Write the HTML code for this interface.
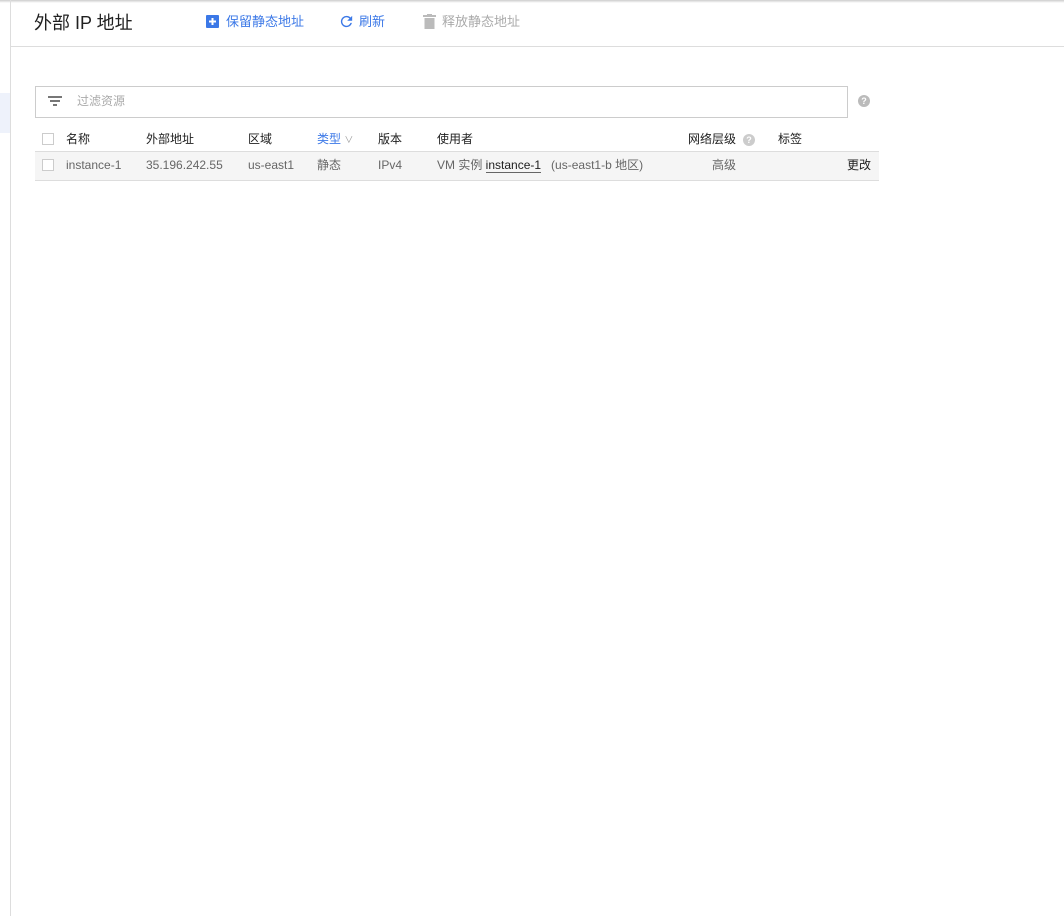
<!DOCTYPE html>
<html><head><meta charset="utf-8"><style>
body{margin:0;width:1064px;height:916px;background:#fff;font-family:"Liberation Sans","Noto Sans CJK SC",sans-serif;position:relative;overflow:hidden;font-size:12px;color:#212121}
.a{position:absolute;white-space:nowrap;line-height:16px}
</style></head><body>
<div class="a" style="left:0;top:0;width:1064px;height:3px;background:linear-gradient(#ccc,#fff)"></div>
<div class="a" style="left:10px;top:0;width:1px;height:916px;background:#ddd"></div>
<div class="a" style="left:0;top:93px;width:10px;height:40px;background:#eef2fb"></div>
<div class="a" style="left:11px;top:46px;width:1053px;height:1px;background:#ddd"></div>
<div class="a" style="left:34px;top:12px;font-size:18px;line-height:22px;color:#212121">外部 IP 地址</div>
<svg class="a" style="left:206px;top:15px" width="13" height="13" viewBox="0 0 13 13"><rect width="13" height="13" rx="1" fill="#3b78e7"/><path d="M6.5 3v7M3 6.5h7" stroke="#fff" stroke-width="2"/></svg>
<div class="a" style="left:226px;top:14px;font-size:13px;color:#3b78e7">保留静态地址</div>
<svg class="a" style="left:338px;top:13px" width="17" height="17" viewBox="0 0 24 24"><path d="M17.65 6.35A7.96 7.96 0 0 0 12 4a8 8 0 1 0 7.73 10h-2.08A6 6 0 1 1 12 6c1.66 0 3.14.69 4.22 1.78L13 11h7V4z" fill="#3b78e7"/></svg>
<div class="a" style="left:359px;top:14px;font-size:13px;color:#3b78e7">刷新</div>
<svg class="a" style="left:423px;top:14px" width="13" height="15" viewBox="0 0 13 15"><rect x="0" y="1" width="13" height="2" fill="#bbb"/><rect x="4" y="0" width="5" height="2" fill="#bbb"/><rect x="1.5" y="4" width="10" height="11" fill="#bbb"/></svg>
<div class="a" style="left:442px;top:14px;font-size:13px;color:#aaa">释放静态地址</div>
<div class="a" style="left:35px;top:86px;width:811px;height:30px;border:1px solid #ccc"></div>
<div class="a" style="left:48px;top:96px;width:14px;height:2px;background:#777"></div>
<div class="a" style="left:50px;top:100px;width:10px;height:2px;background:#777"></div>
<div class="a" style="left:53px;top:104px;width:4px;height:2px;background:#777"></div>
<div class="a" style="left:77px;top:93px;color:#aaa">过滤资源</div>
<div class="a" style="left:858px;top:95px;width:12px;height:12px;border-radius:50%;background:#bbb;color:#fff;font-size:9px;text-align:center;line-height:12px;font-weight:bold">?</div>
<div class="a" style="left:42px;top:133px;width:10px;height:10px;border:1px solid #ccc"></div>
<div class="a" style="left:66px;top:131px">名称</div>
<div class="a" style="left:146px;top:131px">外部地址</div>
<div class="a" style="left:248px;top:131px">区域</div>
<div class="a" style="left:317px;top:131px;color:#3b78e7">类型 <span style="color:#999;font-size:9px">∨</span></div>
<div class="a" style="left:378px;top:131px">版本</div>
<div class="a" style="left:437px;top:131px">使用者</div>
<div class="a" style="left:688px;top:131px">网络层级</div>
<div class="a" style="left:743px;top:134px;width:12px;height:12px;border-radius:50%;background:#ccc;color:#fff;font-size:9px;text-align:center;line-height:12px;font-weight:bold">?</div>
<div class="a" style="left:778px;top:131px">标签</div>
<div class="a" style="left:35px;top:151px;width:844px;height:28px;background:#f5f5f5;border-top:1px solid #ddd;border-bottom:1px solid #ddd"></div>
<div class="a" style="left:42px;top:159px;width:10px;height:10px;border:1px solid #ccc;background:#fff"></div>
<div class="a" style="left:66px;top:157px;color:#666">instance-1</div>
<div class="a" style="left:146px;top:157px;color:#666">35.196.242.55</div>
<div class="a" style="left:248px;top:157px;color:#666">us-east1</div>
<div class="a" style="left:317px;top:157px;color:#666">静态</div>
<div class="a" style="left:378px;top:157px;color:#666">IPv4</div>
<div class="a" style="left:437px;top:157px;color:#666">VM 实例 <span style="color:#212121;border-bottom:1px solid #666">instance-1</span>&nbsp;&nbsp;&nbsp;(us-east1-b 地区)</div>
<div class="a" style="left:712px;top:157px;color:#666">高级</div>
<div class="a" style="left:847px;top:157px">更改</div>
</body></html>
